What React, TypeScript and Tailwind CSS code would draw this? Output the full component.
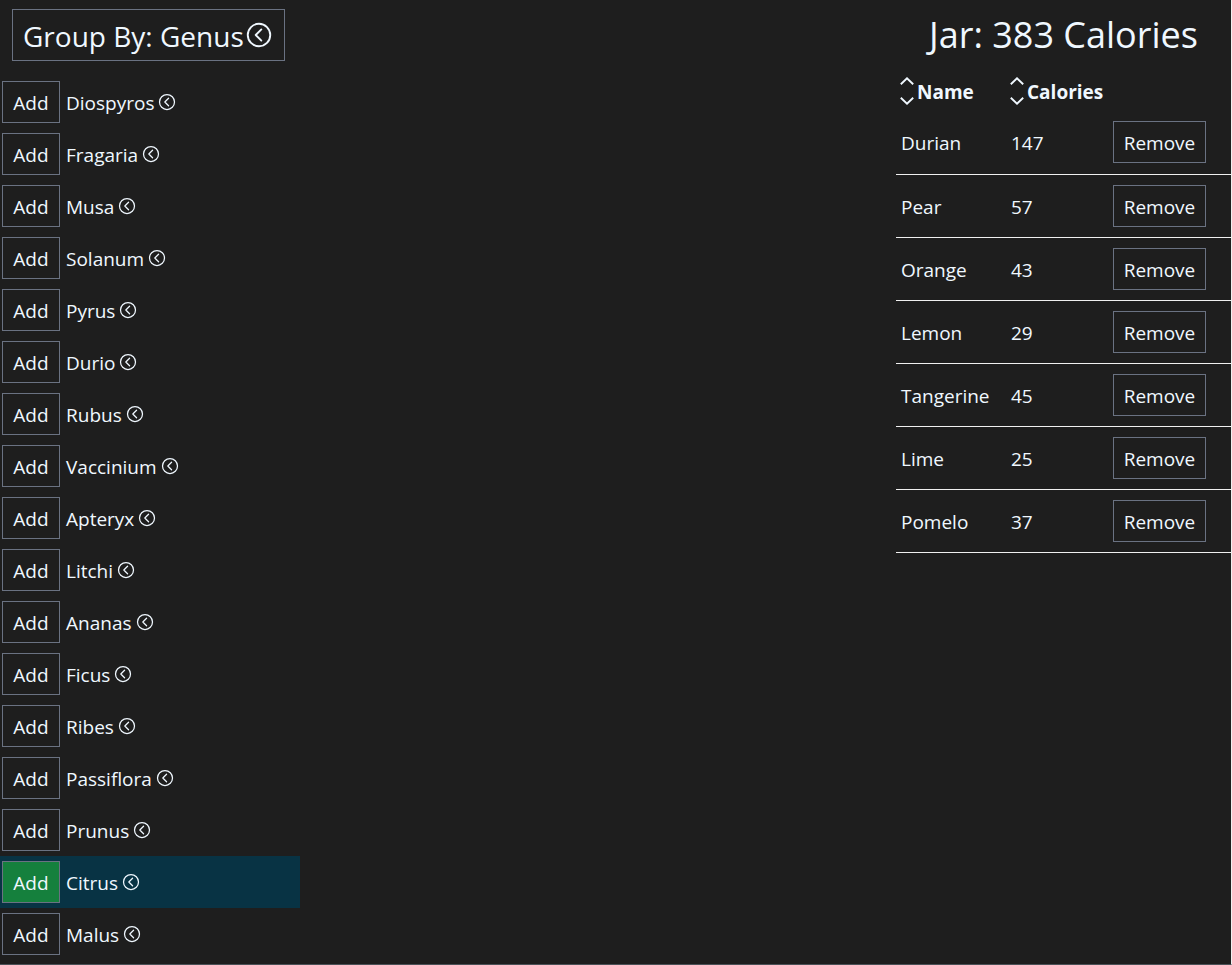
import { IoChevronBackCircleOutline } from "react-icons/io5";

const genera = [
  "Diospyros",
  "Fragaria",
  "Musa",
  "Solanum",
  "Pyrus",
  "Durio",
  "Rubus",
  "Vaccinium",
  "Apteryx",
  "Litchi",
  "Ananas",
  "Ficus",
  "Ribes",
  "Passiflora",
  "Prunus",
  "Citrus",
  "Malus",
];

const active = "Citrus";

const jar = [
  { name: "Durian", calories: 147 },
  { name: "Pear", calories: 57 },
  { name: "Orange", calories: 43 },
  { name: "Lemon", calories: 29 },
  { name: "Tangerine", calories: 45 },
  { name: "Lime", calories: 25 },
  { name: "Pomelo", calories: 37 },
];

const total = jar.reduce((sum, fruit) => sum + fruit.calories, 0);

function SortIcon() {
  return (
    <svg
      viewBox="0 0 14 28"
      className="h-7 w-3.5 shrink-0"
      fill="none"
      stroke="currentColor"
      strokeWidth="1.9"
      aria-hidden="true"
    >
      <path d="M0.8 7.2 7 1.3l6.2 5.9M0.8 20.8l6.2 5.9 6.2-5.9" />
    </svg>
  );
}

function SortHeader({ label }: { label: string }) {
  return (
    <th className="h-[41px] p-0 pl-1 text-left font-bold">
      <button type="button" className="flex items-center gap-[3px]">
        <SortIcon />
        <span className="pt-0.5">{label}</span>
      </button>
    </th>
  );
}

export default function App() {
  return (
    <div className="flex min-h-screen justify-between border-r border-b border-r-[#f0f0f0] border-b-[#4b5157] bg-[#1e1e1e] font-['Open_Sans','Noto_Sans',sans-serif] text-[19px] leading-7 text-[#f0f8ff]">
      <main className="w-[300px]">
        <button
          type="button"
          className="mt-[9px] ml-3 flex h-[52px] w-[273px] items-center border border-gray-500 pl-2.5 text-[28px] whitespace-nowrap"
        >
          <span className="pt-0.5">Group By: Genus</span>
          <IoChevronBackCircleOutline className="size-[30px] shrink-0" />
        </button>
        <ul className="mt-[15px]">
          {genera.map((genus) => (
            <li
              key={genus}
              className={`flex items-center gap-1.5 py-[5px] pl-0.5 ${genus === active ? "bg-[#083344]" : ""}`}
            >
              <button
                type="button"
                className={`h-[42px] w-[58px] border border-gray-500 pt-0.5 ${genus === active ? "bg-[#15803d]" : ""}`}
              >
                Add
              </button>
              <button type="button" className="flex items-center gap-[3px]">
                <span className="pt-0.5">{genus}</span>
                <IoChevronBackCircleOutline className="size-5" />
              </button>
            </li>
          ))}
        </ul>
      </main>

      <aside className="w-[335px]">
        <h1 className="flex h-[70px] items-center justify-center text-4xl">
          Jar: {total} Calories
        </h1>
        <table className="w-full table-fixed border-collapse">
          <colgroup>
            <col className="w-[110px]" />
            <col className="w-[102px]" />
            <col />
          </colgroup>
          <thead>
            <tr>
              <SortHeader label="Name" />
              <SortHeader label="Calories" />
              <td />
            </tr>
          </thead>
          <tbody>
            {jar.map((fruit) => (
              <tr key={fruit.name} className="h-[63px] border-b border-[#f0f0f0]">
                <td className="p-0 pt-0.5 pl-[5px]">{fruit.name}</td>
                <td className="p-0 pt-0.5 pl-[5px]">{fruit.calories}</td>
                <td className="p-0 pl-[5px]">
                  <button
                    type="button"
                    className="block h-[42px] w-[93px] border border-gray-500 pt-0.5"
                  >
                    Remove
                  </button>
                </td>
              </tr>
            ))}
          </tbody>
        </table>
      </aside>
    </div>
  );
}
